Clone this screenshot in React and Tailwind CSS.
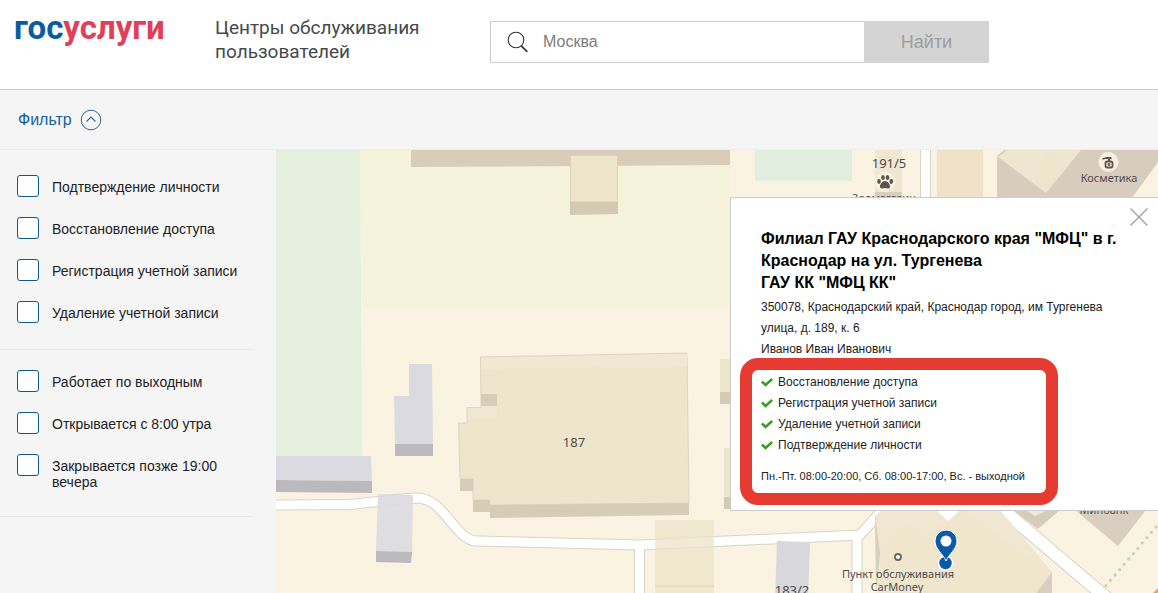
import { useState } from 'react'

const SERVICE_FILTERS = [
  { id: 'confirm', label: 'Подтверждение личности' },
  { id: 'restore', label: 'Восстановление доступа' },
  { id: 'register', label: 'Регистрация учетной записи' },
  { id: 'remove', label: 'Удаление учетной записи' },
]

const SCHEDULE_FILTERS = [
  { id: 'weekend', label: 'Работает по выходным' },
  { id: 'early', label: 'Открывается с 8:00 утра' },
  { id: 'late', label: 'Закрывается позже 19:00 вечера' },
]

const CENTER_SERVICES = [
  'Восстановление доступа',
  'Регистрация учетной записи',
  'Удаление учетной записи',
  'Подтверждение личности',
]

function Header() {
  const [query, setQuery] = useState('')

  return (
    <header className="flex h-[90px] items-start border-b border-[#cccccc] bg-white pl-[14px]">
      <a
        href="#"
        className="w-[201px] shrink-0 pt-2 font-['Roboto',sans-serif] text-[33px] leading-[40px] font-bold text-[#0b5ba1]"
      >
        гос<span className="text-[#e03f5a]">услуги</span>
      </a>
      <h1 className="mt-4 w-[275px] shrink-0 font-['Roboto',sans-serif] text-[19px] leading-6 text-[#45494d]">
        Центры обслуживания пользователей
      </h1>
      <form className="mt-[21px] flex h-[42px] w-[499px]" onSubmit={(e) => e.preventDefault()}>
        <label className="flex flex-1 items-center border border-r-0 border-[#cccccc] pl-4">
          <svg width="22" height="22" viewBox="0 0 22 22" fill="none" stroke="#333" className="shrink-0">
            <circle cx="9" cy="9" r="7.8" strokeWidth="1.1" />
            <path d="M14.3 14.8 L20.3 20.8" strokeWidth="1.7" />
          </svg>
          <input
            type="text"
            aria-label="Город"
            placeholder="Москва"
            value={query}
            onChange={(e) => setQuery(e.target.value)}
            className="ml-3.5 min-w-0 flex-1 text-[16px] outline-none placeholder:text-[#7d7d7d]"
          />
        </label>
        <button type="submit" className="w-[125px] bg-[#d4d4d4] text-[18px] text-[#9b9e9e]">
          Найти
        </button>
      </form>
    </header>
  )
}

function FilterGroup({ items }) {
  return (
    <fieldset className="mr-6 flex flex-col gap-5 border-b border-[#e8e8e9] pr-3 pb-[26px] pl-[17px]">
      {items.map((item) => (
        <label key={item.id} className="flex items-start gap-[13px]">
          <input
            type="checkbox"
            className="size-[22px] shrink-0 appearance-none rounded-[3px] border border-[#0e5c86] bg-white checked:bg-[#0e5c86]"
          />
          <span className="mt-1 text-[14px] leading-4 text-[#222222]">{item.label}</span>
        </label>
      ))}
    </fieldset>
  )
}

function Pin() {
  return (
    <g>
      <circle cx="945.5" cy="563" r="7" fill="#0a5aa8" stroke="#fff" strokeWidth="1.5" />
      <path
        d="M946 561 C943 554 935 549 935 541 a11 11 0 0 1 22 0 C957 549 949 554 946 561 Z"
        fill="#0a5aa8"
        stroke="#fff"
        strokeWidth="1"
      />
      <circle cx="946" cy="541" r="5.5" fill="#fff" />
    </g>
  )
}

function CityMap() {
  return (
    <svg
      viewBox="276 150 882 443"
      preserveAspectRatio="xMinYMin slice"
      className="absolute inset-0 size-full bg-[#fbf3e1] font-['Noto_Sans',sans-serif]"
      role="img"
      aria-label="Карта"
    >
      {/* lawns */}
      <path d="M276 150 H360 L362 457 H276 Z" fill="#e4f0dd" />
      <path d="M360 150 H730 V308 H362 Z" fill="#f5f3db" />
      <path d="M755 150 H852 V181 H755 Z" fill="#e2efe0" />

      {/* roads */}
      <g fill="none" strokeLinejoin="round">
        <g stroke="#d8d3c8" strokeWidth="11">
          <path d="M270 505 L350 504.500 C375 502 395 499 417 498 C445 498 455 542 478 541 L640 545 L860 535 L884 508" />
          <path d="M639.500 545 V600 M857 535 V600" />
          <path d="M996 504 L1109 600" strokeWidth="14" />
          <path d="M925.500 140 V205" />
        </g>
        <g stroke="#ffffff" strokeWidth="9">
          <path d="M270 505 L350 504.500 C375 502 395 499 417 498 C445 498 455 542 478 541 L640 545 L860 535 L884 508" />
          <path d="M639.500 545 V600 M857 535 V600" />
          <path d="M996 504 L1109 600" strokeWidth="12" />
          <path d="M925.500 140 V205" />
        </g>
      </g>

      {/* top row of buildings */}
      <path d="M411 150 H730 V165 L411 167 Z" fill="#d9ccb8" />
      <path d="M570.500 155.500 H617.500 V202 H570.500 Z" fill="#efe5ca" stroke="#ddd1b4" />
      <path d="M570 202 H618 V214 L570 215 Z" fill="#d5cab1" />
      <path d="M875 150 H902 V192 H875 Z" fill="#f0e6d1" />
      <path d="M875 192 H902 V200 H875 Z" fill="#d8cebc" />
      <path d="M937 150 H983 V200 H937 Z" fill="#efe2c8" />
      <path d="M997 156 L1004 150 H1158 V162 L1132 198 H997 Z" fill="#d8cdbc" />
      <path d="M998 157 L1007 150 H1081 L1046 193 Z" fill="#eee6d0" />
      <path d="M1029 180 L1050 152 L1065 169 L1046 193 Z" fill="#efe4cc" />

      {/* building 187 */}
      <path
        d="M480.500 357 L535 356 L687 353 L689 503 L490 505 L489 500 H473 V479 H460 L458.500 423 H467 V407.500 H481 Z"
        fill="#efe5cd"
        stroke="#ded5c1"
      />
      <path d="M481 358 L687 354 V366 L481 369 Z" fill="#f1e8d4" />
      <path d="M468 408 H497 V418 H468 Z" fill="#f1e8d4" />
      <path
        d="M481 394 H497 V406 H481 Z M460 479 H473 V491 H460 Z M473 500 H490 V512 H473 Z M490 505 L689 503 V515 L490 518 Z"
        fill="#d7ccb8"
      />
      <path d="M720 359 H731 V392 H720 Z M724 448 H731 V497 H724 Z" fill="#eee5cd" />
      <path d="M720 392 H731 V404 H720 Z M724 497 H731 V509 H724 Z" fill="#d5cab4" />

      {/* grey buildings */}
      <g fill="#dbdae0">
        <path d="M409 364 H432 L433 444 H395 L394 396 H409 Z" />
        <path d="M276 456 H371 L372 481 L276 480 Z" />
        <path d="M378 494 L413 495 L412 552 L376 551 Z" fillOpacity="0.93" />
        <path d="M777 541 L810 542 L808 600 H775 Z" fill="#d7d7dc" />
      </g>
      <g fill="#bab9bd">
        <path d="M395 444 H433 V456 H395 Z" />
        <path d="M276 480 L372 481 V493 L276 492 Z" />
        <path d="M376 551 L412 552 L411 563 L376 562 Z" />
      </g>
      <path d="M655 520 H714 V600 H655 Z" fill="#ece3c8" fillOpacity="0.75" />
      <path d="M655 586 H714" stroke="#ddd4bb" />

      {/* buildings around the pin */}
      <path d="M875 516 L882 510 H1000 L1052 572 V600 H877 Z" fill="#efe7d1" />
      <path d="M886 542 L906 521 L925 536 L963 510 L1052 572 L1036 593 H886 Z" fill="#f0e6ce" />
      <path d="M936 510 H960 L948 521 Z" fill="#ffffff" />
      <path d="M875 514 L880 554 L876 593 Z" fill="#d9cfbd" />
      <path d="M1052 572 V600 H1031 Z" fill="#d9cfc0" />
      <path d="M1013 510 H1060 L1038 529 Z" fill="#d6ccba" />
      <path d="M1026 510 H1048 L1035 516 Z" fill="#f2ead7" />
      <path d="M1075 510 H1146 L1118 546 Z" fill="#d9cfc1" />
      <path d="M1156 527 L1103 589" stroke="#c9d3b0" strokeWidth="3.200" strokeLinecap="round" strokeDasharray="0 7" />
      <path d="M1158 588 V593 H1153 Z" fill="#f0a35c" />

      {/* places */}
      <circle cx="885" cy="182" r="10" fill="#f9f1e4" />
      <g fill="#5e544c">
        <ellipse cx="879" cy="181.500" rx="1.800" ry="2.400" />
        <ellipse cx="883" cy="177.500" rx="1.800" ry="2.500" />
        <ellipse cx="887.500" cy="177.500" rx="1.800" ry="2.500" />
        <ellipse cx="891.300" cy="181.500" rx="1.800" ry="2.400" />
        <path d="M885 181 c3 0 5 3.500 5 5.500 c0 2.500-2.500 2-5 1.500 c-2.500.5-5 1-5-1.500 c0-2 2-5.500 5-5.500 Z" />
      </g>
      <circle cx="1108.500" cy="162" r="10" fill="#f7eee4" />
      <g fill="none" stroke="#5e544c" strokeWidth="1.800">
        <rect x="1105.500" y="161.500" width="7" height="6" rx="1.800" />
        <path d="M1109 161 V157 M1106 158 H1111.500 M1102.500 159 L1106 158" />
        <circle cx="1109" cy="164.500" r="0.600" />
      </g>
      <circle cx="898" cy="557" r="3" fill="#fff" stroke="#6b625b" strokeWidth="1.800" />

      <g fill="#504b4b" fontSize="11" textAnchor="middle">
        <text x="889" y="168" fontSize="13">191/5</text>
        <text x="574" y="447" fontSize="13">187</text>
        <text x="792" y="595" fontSize="13">183/2</text>
        <text x="884" y="202">Зоомагазин</text>
        <text x="1109" y="182">Косметика</text>
        <text x="1104" y="514">Минбанк</text>
        <text x="898" y="578">Пункт обслуживания</text>
        <text x="897" y="591">CarMoney</text>
      </g>

      <Pin />
    </svg>
  )
}

function CenterCard({ onClose }) {
  return (
    <article className="absolute top-[47px] right-0 w-[428px] border border-r-0 border-[#cccccc] bg-white pt-[30px] pr-9 pb-[23px] pl-[30px] text-[12px] leading-[21px] text-[#222222]">
      <button type="button" aria-label="Закрыть" onClick={onClose} className="absolute top-2.5 right-2.5">
        <svg width="18" height="18" viewBox="0 0 18 18" stroke="#a6a6a6" strokeWidth="1.500">
          <path d="M0.500 0.500 L17.500 17.500 M17.500 0.500 L0.500 17.500" />
        </svg>
      </button>
      <h2 className="text-[16px] leading-[22px] font-bold text-black">
        Филиал ГАУ Краснодарского края "МФЦ" в г. Краснодар на ул. Тургенева
        <br />
        ГАУ КК "МФЦ КК"
      </h2>
      <p className="mt-[3px]">350078, Краснодарский край, Краснодар город, им Тургенева улица, д. 189, к. 6</p>
      <p>Иванов Иван Иванович</p>

      <div className="relative mt-3">
        <ul>
          {CENTER_SERVICES.map((service) => (
            <li key={service} className="flex items-center gap-[5px]">
              <svg width="12" height="9" viewBox="0 0 12 9" fill="none" stroke="#35a01c" strokeWidth="2.500">
                <path d="M0.900 3.500 L4.500 7 L11.200 1" />
              </svg>
              {service}
            </li>
          ))}
        </ul>
        <p className="mt-2.5 text-[11px]">Пн.-Пт. 08:00-20:00, Сб. 08:00-17:00, Вс. - выходной</p>
        <div className="pointer-events-none absolute -top-[14px] -bottom-[18px] -left-[21px] w-[318px] rounded-[18px] border-[12px] border-[#e53b32]" />
      </div>
    </article>
  )
}

export default function App() {
  const [filterOpen, setFilterOpen] = useState(true)
  const [cardOpen, setCardOpen] = useState(true)

  return (
    <div className="flex min-h-screen flex-col bg-[#f5f5f6] font-['Liberation_Sans',Arial,sans-serif]">
      <Header />
      <div className="flex h-[60px] items-center border-b border-[#ededed] pl-[18px]">
        <button
          type="button"
          aria-expanded={filterOpen}
          onClick={() => setFilterOpen(!filterOpen)}
          className="flex items-center gap-2 text-[16px] text-[#14619c]"
        >
          Фильтр
          <svg width="22" height="22" viewBox="0 0 22 22" fill="none" stroke="#33699f">
            <circle cx="11" cy="11" r="9.800" />
            <path d="M6.500 12.500 L11 8 L15.500 12.500" strokeWidth="1.200" />
          </svg>
        </button>
      </div>
      <div className="flex flex-1">
        {filterOpen && (
          <aside className="flex w-[276px] shrink-0 flex-col gap-5 pt-[25px]">
            <FilterGroup items={SERVICE_FILTERS} />
            <FilterGroup items={SCHEDULE_FILTERS} />
          </aside>
        )}
        <main className="relative flex-1 overflow-hidden">
          <CityMap />
          {cardOpen && <CenterCard onClose={() => setCardOpen(false)} />}
        </main>
      </div>
    </div>
  )
}
